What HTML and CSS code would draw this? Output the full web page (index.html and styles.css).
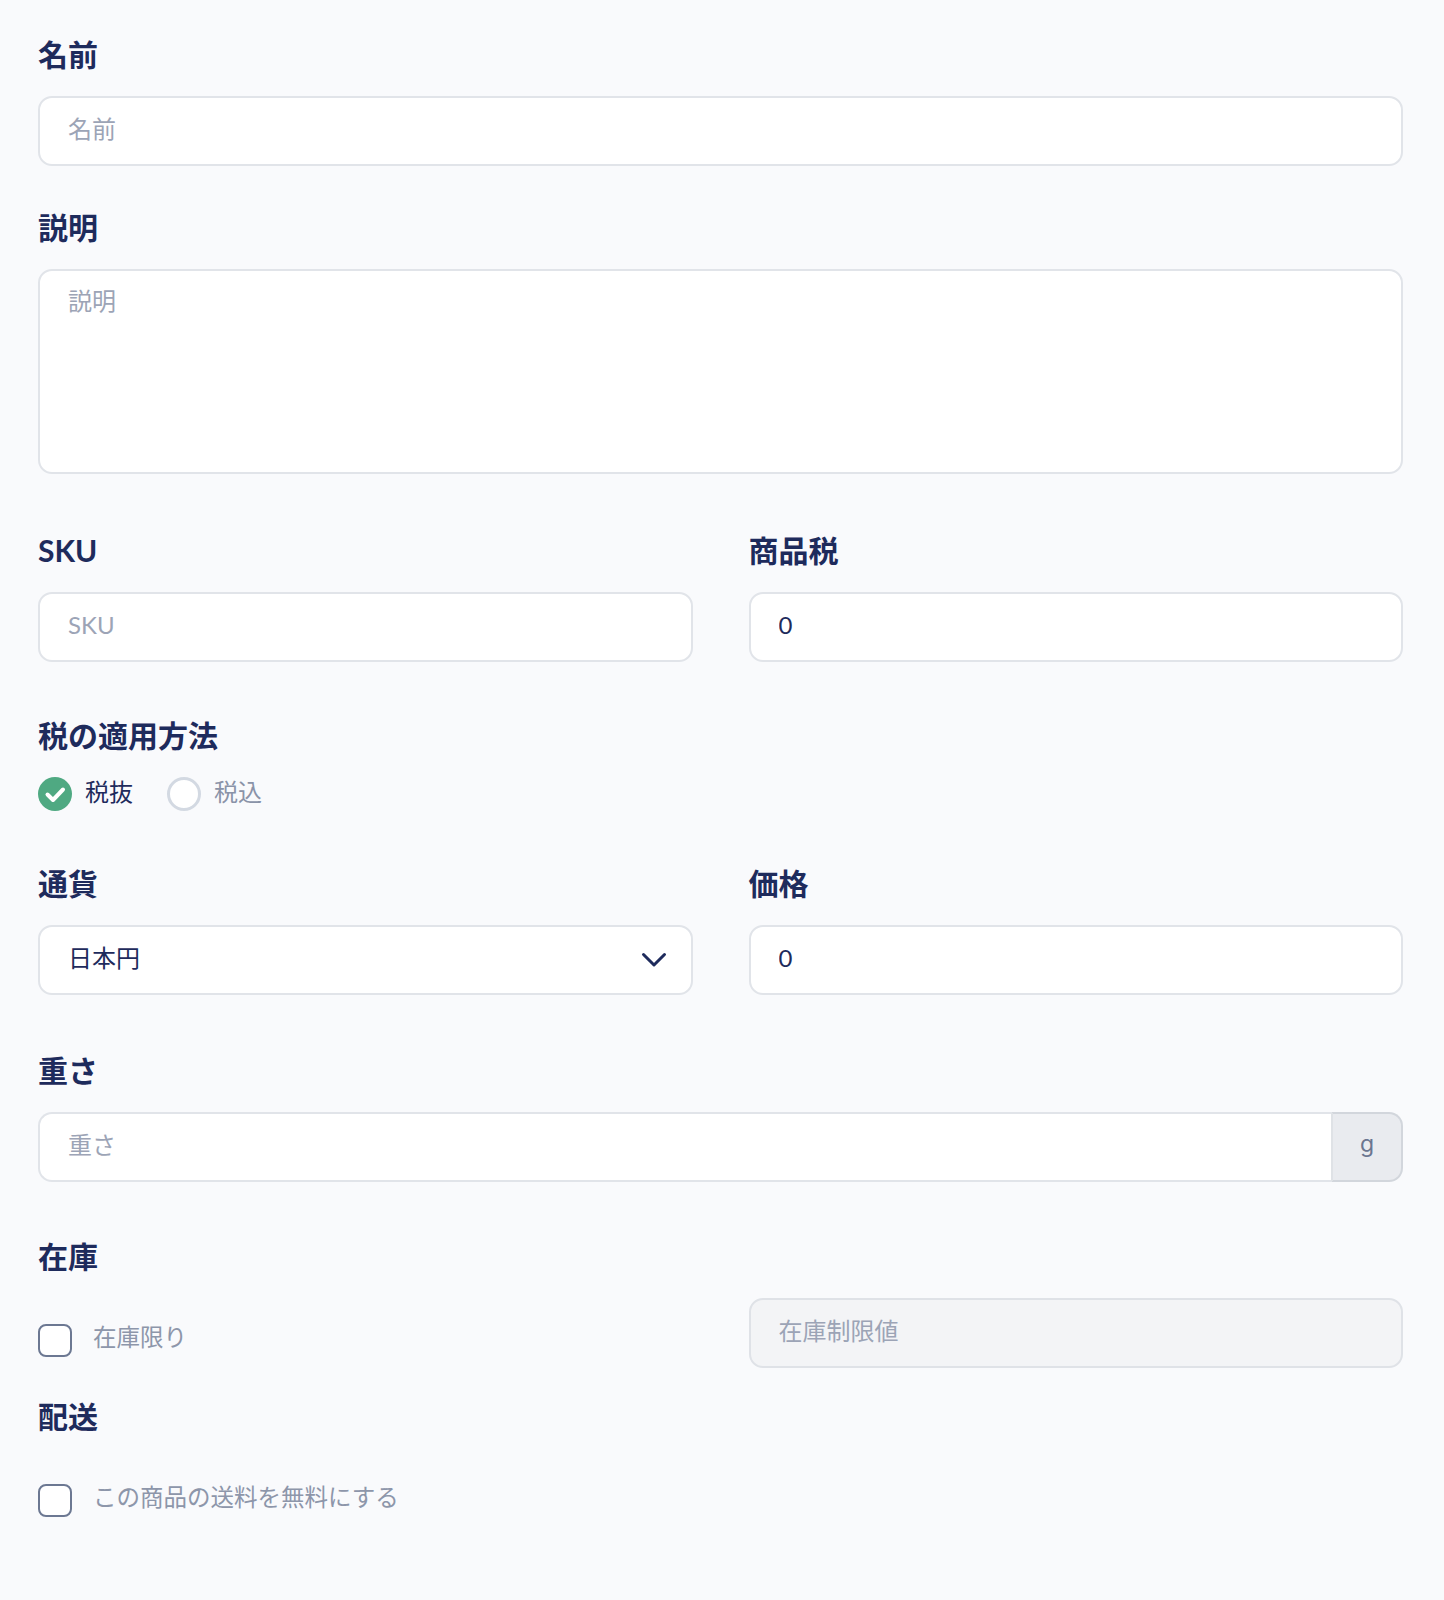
FILE: index.html
```html
<!DOCTYPE html>
<html lang="ja">
<head>
<meta charset="utf-8">
<title>商品フォーム</title>
<link rel="stylesheet" href="styles.css">
</head>
<body>
<form class="form">
  <div class="block block-name">
    <label class="field-label" for="name">名前</label>
    <input class="control" id="name" type="text" placeholder="名前">
  </div>

  <div class="block block-desc">
    <label class="field-label" for="desc">説明</label>
    <textarea class="control control-area" id="desc" placeholder="説明"></textarea>
  </div>

  <div class="block block-sku row">
    <div class="col">
      <label class="field-label" for="sku">SKU</label>
      <input class="control" id="sku" type="text" placeholder="SKU">
    </div>
    <div class="col">
      <label class="field-label" for="tax">商品税</label>
      <input class="control" id="tax" type="text" value="0">
    </div>
  </div>

  <div class="block block-taxmode">
    <div class="field-label">税の適用方法</div>
    <div class="radio-group">
      <label class="radio-item">
        <span class="radio radio-checked">
          <svg viewBox="0 0 34 34" width="34" height="34"><path d="M9.5 17.5 L15 23 L25 12.5" fill="none" stroke="#ffffff" stroke-width="4" stroke-linecap="round" stroke-linejoin="round"/></svg>
        </span>
        <span class="radio-text radio-text-on">税抜</span>
      </label>
      <label class="radio-item">
        <span class="radio"></span>
        <span class="radio-text">税込</span>
      </label>
    </div>
  </div>

  <div class="block block-price row">
    <div class="col">
      <label class="field-label" for="currency">通貨</label>
      <div class="select-wrap">
        <select class="control control-select" id="currency">
          <option>日本円</option>
        </select>
        <svg class="chevron" viewBox="0 0 26 16" width="26" height="16"><path d="M2.5 2.5 L13 13 L23.5 2.5" fill="none" stroke="#1e2b5c" stroke-width="3" stroke-linecap="round" stroke-linejoin="round"/></svg>
      </div>
    </div>
    <div class="col">
      <label class="field-label" for="price">価格</label>
      <input class="control" id="price" type="text" value="0">
    </div>
  </div>

  <div class="block block-weight">
    <label class="field-label" for="weight">重さ</label>
    <div class="input-group">
      <input class="control control-grouped" id="weight" type="text" placeholder="重さ">
      <span class="addon">g</span>
    </div>
  </div>

  <div class="block block-stock">
    <div class="field-label">在庫</div>
    <div class="row">
      <div class="col check-wrap">
        <label class="check-item">
          <span class="checkbox"></span>
          <span class="check-text">在庫限り</span>
        </label>
      </div>
      <div class="col">
        <input class="control control-disabled" type="text" placeholder="在庫制限値" disabled>
      </div>
    </div>
  </div>

  <div class="block block-ship">
    <div class="field-label">配送</div>
    <div class="check-wrap">
      <label class="check-item">
        <span class="checkbox"></span>
        <span class="check-text">この商品の送料を無料にする</span>
      </label>
    </div>
  </div>
</form>
</body>
</html>
```

FILE: styles.css
```css
* {
  box-sizing: border-box;
}

html, body {
  margin: 0;
  background: #f9fafc;
}

body {
  font-family: "Lato", "Noto Sans CJK JP", sans-serif;
  color: #1e2b5c;
  min-height: 1600px;
}

.form {
  padding: 38px 41px 60px 38px;
}

.block {
  margin-bottom: 58px;
}

.block-name {
  margin-bottom: 45px;
}

.block-desc {
  margin-bottom: 60px;
}

.block-sku {
  margin-bottom: 57px;
}

.block-taxmode {
  margin-bottom: 56px;
}

.block-price {
  margin-bottom: 59px;
}

.block-weight {
  margin-bottom: 58px;
}

.block-stock {
  margin-bottom: 32px;
}

.block-ship {
  margin-bottom: 0;
}

.row {
  display: grid;
  grid-template-columns: 1fr 1fr;
  column-gap: 56px;
}

.field-label {
  display: block;
  font-size: 30px;
  font-weight: 700;
  line-height: 32px;
  color: #1e2b5c;
  margin-bottom: 26px;
}

.control {
  display: block;
  width: 100%;
  height: 70px;
  margin: 0;
  border: 2px solid #e1e4e9;
  border-radius: 14px;
  background: #ffffff;
  padding: 0 28px 6px;
  font-family: "Lato", "Noto Sans CJK JP", sans-serif;
  font-size: 24px;
  color: #1e2b5c;
  outline: none;
}

.control::placeholder {
  color: #9ca4b6;
  opacity: 1;
}

.control-area {
  height: 205px;
  padding-top: 13px;
  padding-bottom: 0;
  resize: none;
  line-height: 34px;
}

.select-wrap {
  position: relative;
}

.control-select {
  appearance: none;
  -webkit-appearance: none;
  padding-right: 70px;
}

.chevron {
  position: absolute;
  right: 26px;
  top: 50%;
  transform: translateY(-50%);
}

.input-group {
  display: flex;
}

.control-grouped {
  flex: 1;
  border-radius: 14px 0 0 14px;
  border-right: none;
}

.addon {
  width: 72px;
  height: 70px;
  flex: none;
  display: flex;
  align-items: center;
  justify-content: center;
  background: #e9ebef;
  border: 2px solid #d2d6dc;
  border-left-color: #dfe2e6;
  border-radius: 0 14px 14px 0;
  font-family: "Inter", "Roboto", sans-serif;
  font-size: 23px;
  color: #6b7690;
  padding-bottom: 6px;
}

.control-disabled {
  background: #f3f4f6;
  border-color: #dfe2e7;
}

.radio-group {
  display: flex;
  align-items: center;
  gap: 34px;
  height: 34px;
}

.radio-item {
  display: flex;
  align-items: center;
  gap: 13px;
}

.radio {
  width: 34px;
  height: 34px;
  border-radius: 50%;
  border: 3px solid #d3d9e2;
  background: #ffffff;
  display: block;
  flex: none;
}

.radio-checked {
  border: none;
  background: #4fa982;
}

.radio-checked svg {
  display: block;
}

.radio-text {
  font-size: 24px;
  line-height: 28px;
  padding-bottom: 4px;
  color: #8a93a8;
}

.radio-text-on {
  color: #1e2b5c;
}

.check-wrap {
  padding-top: 26px;
}

.check-item {
  display: flex;
  align-items: center;
  gap: 21px;
  height: 33px;
}

.checkbox {
  width: 34px;
  height: 33px;
  border: 2px solid #6c7892;
  border-radius: 8px;
  background: #ffffff;
  flex: none;
  display: block;
}

.check-text {
  font-size: 23.5px;
  line-height: 24px;
  padding-bottom: 8px;
  color: #8d96aa;
}
```
